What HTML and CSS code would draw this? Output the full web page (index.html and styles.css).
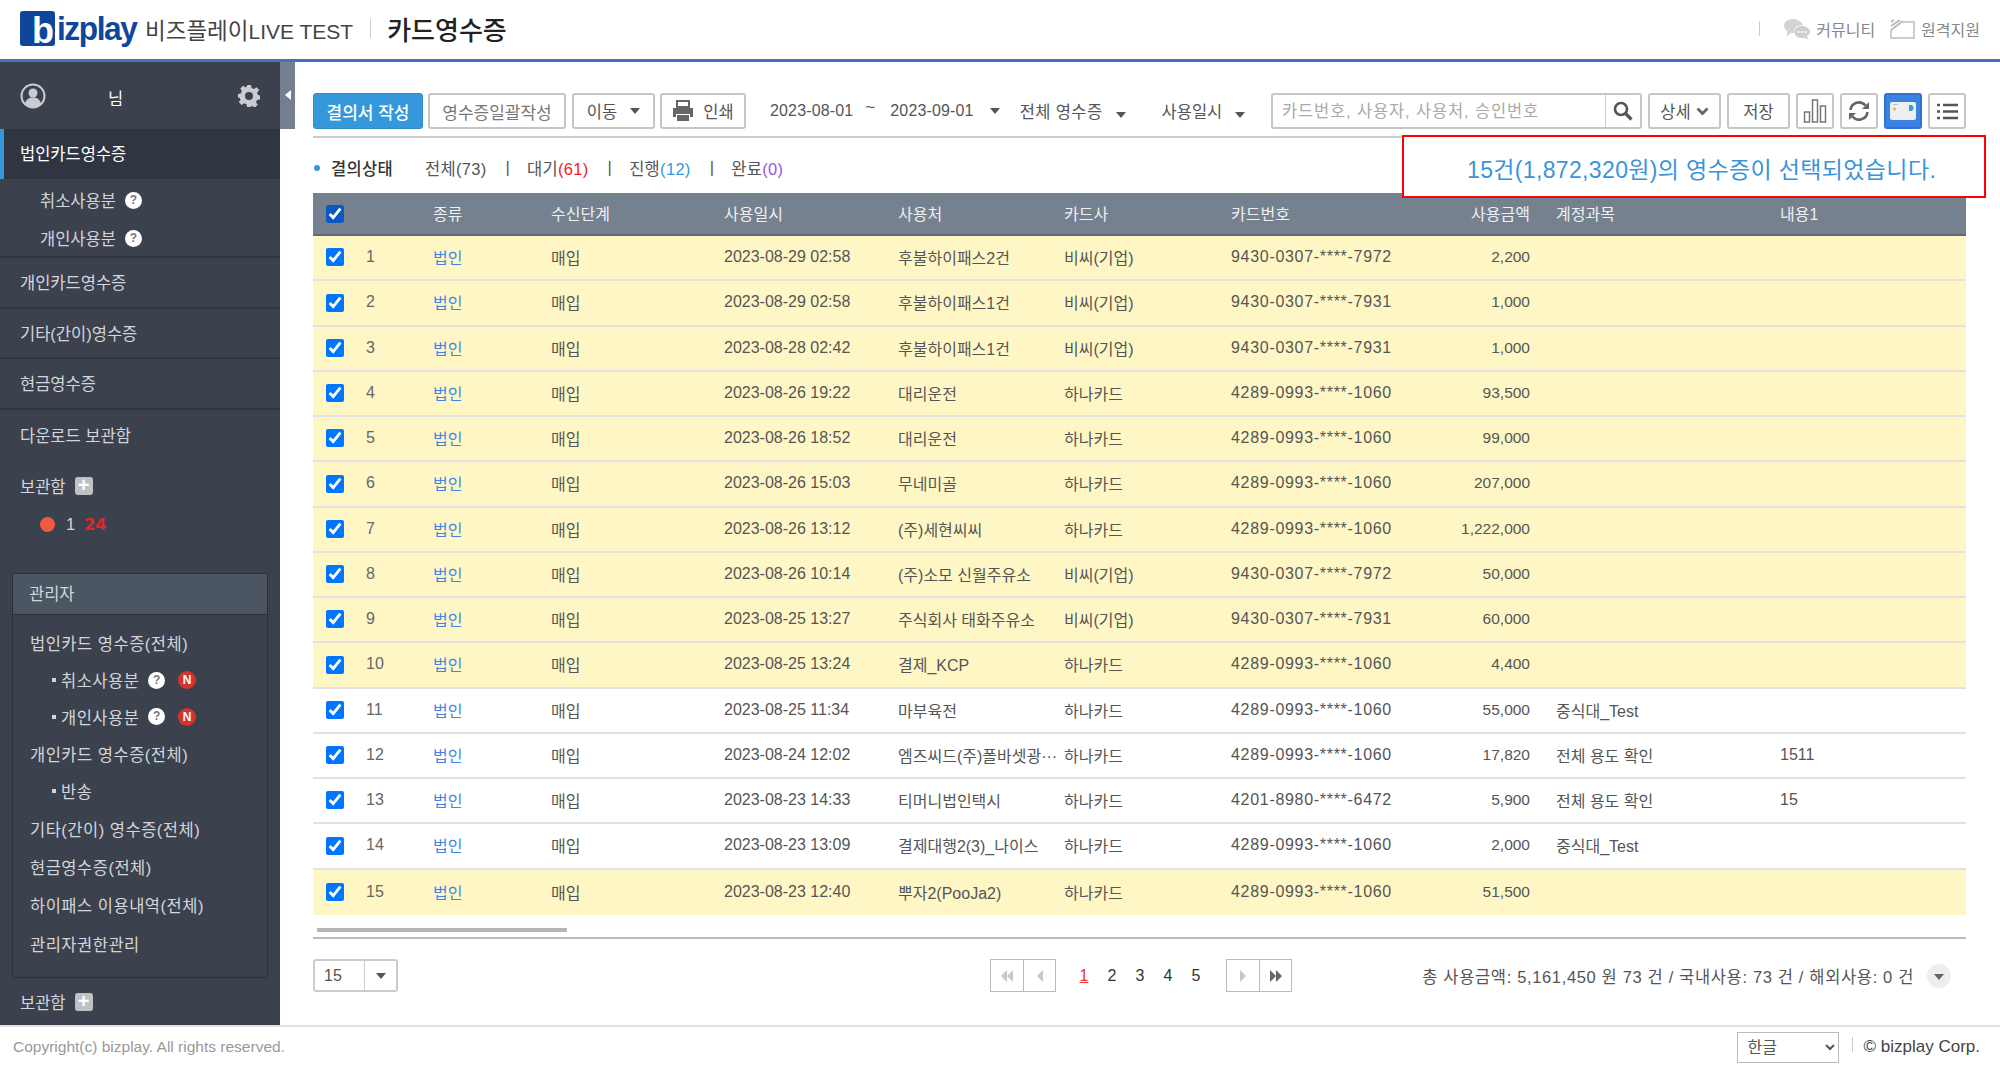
FILE: index.html
```html
<!DOCTYPE html>
<html lang="ko">
<head>
  <meta charset="UTF-8" />
  <title>bizplay 카드영수증</title>
  <link rel="stylesheet" href="styles.css">
</head>
<body>
  <header class="top">
    <div class="logo"><span class="logo-b">b</span><span class="logo-rest">izplay</span></div>
    <span class="company">비즈플레이<span class="company-en">LIVE TEST</span></span>
    <span class="top-sep"></span>
    <span class="page-title">카드영수증</span>
    <div class="top-links">
      <span class="top-sep-right"></span>
      <svg class="top-icon" width="26" height="20" viewBox="0 0 26 20"><path d="M9 0C4 0 0 3 0 7c0 2.400 1.500 4.400 3.500 5.600L2.500 17l5-3.200c1 .2 2 .2 3 0C9.500 9 13 6 19 6 17.500 2.500 13.500 0 9 0z" fill="#d4d4d4"/><path d="M18 7c-4.500 0-7.500 2.700-7.500 6s3 6 7.500 6c.7 0 1.400 0 2-.2L24 20l-1-3.200c1.800-1 3-2.300 3-3.800 0-3.300-3.500-6-8-6z" fill="#cfcfcf"/><circle cx="14.500" cy="13" r="1.100" fill="#fff"/><circle cx="18" cy="13" r="1.100" fill="#fff"/><circle cx="21.500" cy="13" r="1.100" fill="#fff"/></svg>
      <span>커뮤니티</span>
      <svg class="top-icon icon-remote" width="25" height="20" viewBox="0 0 25 20"><path d="M13 3h11v16H1V11" fill="none" stroke="#ccc" stroke-width="2"/><path d="M1 7L10 1M1 3l3-2M1 11L13 2" stroke="#bbb" stroke-width="2" fill="none"/></svg>
      <span>원격지원</span>
    </div>
  </header>

  <div class="layout">
    <aside class="sidebar">
      <button class="side-toggle"><svg width="6" height="10" viewBox="0 0 6 10"><path d="M6 0v10L0 5z" fill="#fff"/></svg></button>
      <div class="user-box">
        <svg width="26" height="26" viewBox="0 0 26 26"><circle cx="13" cy="13" r="11.500" fill="#3b424e" stroke="#c9cdd2" stroke-width="2"/><circle cx="13" cy="10" r="4.500" fill="#c9cdd2"/><path d="M5 21c1-5 4-6.500 8-6.500s7 1.500 8 6.500a11 11 0 0 1-16 0z" fill="#c9cdd2"/></svg>
        <span class="user-name">님</span>
        <svg class="gear" width="22" height="22" viewBox="0 0 22 22"><path d="M9 0h4l.6 3 2.300 1 2.600-1.700 2.800 2.800L19 7.700l1 2.300 2 .6v4l-3 .4-1 2.300 1.700 2.500-2.800 2.800-2.500-1.700-2.400 1L12.600 22H9l-.5-2.800-2.400-1-2.500 1.700-2.800-2.800L2.500 15l-.9-2.200L0 12.600V9l2.800-.6 1-2.300L2.300 3.600l2.800-2.800 2.500 1.700L9.400.6z" fill="#c9cdd2"/><circle cx="11" cy="11" r="4" fill="#3b424e"/></svg>
      </div>

      <a class="side-item active">법인카드영수증</a>
      <div class="side-sub">
        <div class="sub-item">취소사용분 <span class="qmark">?</span></div>
        <div class="sub-item">개인사용분 <span class="qmark">?</span></div>
      </div>
      <a class="side-item">개인카드영수증</a>
      <a class="side-item">기타(간이)영수증</a>
      <a class="side-item">현금영수증</a>
      <a class="side-item no-line">다운로드 보관함</a>

      <div class="box-title first">보관함 <span class="plus">+</span></div>
      <div class="box-row"><span class="red-dot"></span><span class="box-name">1</span><b class="box-count">24</b></div>

      <div class="admin">
        <div class="admin-head">관리자</div>
        <div class="admin-list">
          <div class="admin-item">법인카드 영수증(전체)</div>
          <div class="admin-sub"><i></i>취소사용분 <span class="qmark">?</span><span class="nbadge">N</span></div>
          <div class="admin-sub"><i></i>개인사용분 <span class="qmark">?</span><span class="nbadge">N</span></div>
          <div class="admin-item">개인카드 영수증(전체)</div>
          <div class="admin-sub"><i></i>반송</div>
          <div class="admin-item">기타(간이) 영수증(전체)</div>
          <div class="admin-item">현금영수증(전체)</div>
          <div class="admin-item">하이패스 이용내역(전체)</div>
          <div class="admin-item">관리자권한관리</div>
        </div>
      </div>

      <div class="box-title last">보관함 <span class="plus">+</span></div>
    </aside>

    <main class="content">
      <div class="toolbar">
        <button class="btn btn-primary w-110">결의서 작성</button>
        <button class="btn w-138 faint">영수증일괄작성</button>
        <button class="btn w-83">이동<span class="caret"></span></button>
        <button class="btn w-86">
          <svg width="22" height="22" viewBox="0 0 22 22"><path d="M5 1h12v6H5z" fill="none" stroke="#666" stroke-width="2"/><path d="M1 8h20v9h-3v-3H4v3H1z" fill="#666"/><path d="M5 15h12v6H5z" fill="#666"/></svg>
          <span class="print-label">인쇄</span>
        </button>
        <span class="date">2023-08-01</span><span class="tilde">~</span><span class="date">2023-09-01</span><span class="caret caret-date"></span>
        <span class="filter f-all">전체 영수증<span class="caret"></span></span>
        <span class="filter f-use">사용일시<span class="caret"></span></span>
        <div class="search">
          <span class="search-text">카드번호, 사용자, 사용처, 승인번호</span>
          <span class="search-btn"><svg width="20" height="20" viewBox="0 0 20 20"><circle cx="8" cy="8" r="6" fill="none" stroke="#555" stroke-width="2.600"/><path d="M12.500 12.500L18.500 18.500" stroke="#555" stroke-width="3.200"/></svg></span>
        </div>
        <button class="btn w-73">상세<svg class="chev" width="13" height="9" viewBox="0 0 13 9"><path d="M1.500 1.500l5 5 5-5" fill="none" stroke="#666" stroke-width="2.800"/></svg></button>
        <button class="btn w-63">저장</button>
        <button class="btn w-38"><svg width="26" height="24" viewBox="0 0 26 24"><path d="M2.500 13h5v10h-5zM10.500 1h5v22h-5zM18.500 7h5v16h-5z" fill="none" stroke="#777" stroke-width="1.500"/></svg></button>
        <button class="btn w-38"><svg width="24" height="24" viewBox="0 0 24 24"><path d="M3.500 11a8.500 8.500 0 0 1 15-4.500" fill="none" stroke="#666" stroke-width="2.600"/><path d="M22 3v7h-7z" fill="#666"/><path d="M20.500 13a8.500 8.500 0 0 1-15 4.500" fill="none" stroke="#666" stroke-width="2.600"/><path d="M2 21v-7h7z" fill="#666"/></svg></button>
        <button class="btn w-38 btn-card"><svg width="28" height="22" viewBox="0 0 28 22"><rect x="1" y="2" width="26" height="18" rx="2" fill="#edeff1"/><path d="M4 4.500h5" stroke="#a9cbe8" stroke-width="1"/><circle cx="5.500" cy="9" r="1.600" fill="#f5b042"/><path d="M20 5h3l2 3-2 3h-3z" fill="#3d9bdc"/></svg></button>
        <button class="btn w-38"><svg width="21" height="17" viewBox="0 0 21 17"><path d="M6 2h15M6 8.500h15M6 15h15" stroke="#555" stroke-width="2.400"/><path d="M0 2h3M0 8.500h3M0 15h3" stroke="#555" stroke-width="2.400"/></svg></button>
      </div>

      <div class="status">
        <span class="status-dot"></span>
        <b class="status-label">결의상태</b>
        <span>전체(73)</span><span class="bar">|</span>
        <span>대기<em class="c-red">(61)</em></span><span class="bar">|</span>
        <span>진행<em class="c-blue">(12)</em></span><span class="bar">|</span>
        <span>완료<em class="c-purple">(0)</em></span>
      </div>

      <div class="selected-note">15건(1,872,320원)의 영수증이 선택되었습니다.</div>

      <table class="grid">
        <colgroup>
          <col class="c-chk"><col class="c-no"><col class="c-type"><col class="c-stage"><col class="c-date"><col class="c-vendor"><col class="c-card"><col class="c-cardno"><col class="c-amt"><col class="c-acct"><col>
        </colgroup>
        <thead>
          <tr><th class="center"><input type="checkbox" class="chk-head" checked></th><th></th><th>종류</th><th>수신단계</th><th>사용일시</th><th>사용처</th><th>카드사</th><th>카드번호</th><th class="right">사용금액</th><th class="acct">계정과목</th><th>내용1</th></tr>
        </thead>
        <tbody>
          <tr class="on"><td class="center"><input type="checkbox" checked></td><td class="no">1</td><td class="link">법인</td><td>매입</td><td class="num">2023-08-29 02:58</td><td>후불하이패스2건</td><td>비씨(기업)</td><td class="cardno">9430-0307-****-7972</td><td class="amt">2,200</td><td class="acct"></td><td></td></tr>
          <tr class="on"><td class="center"><input type="checkbox" checked></td><td class="no">2</td><td class="link">법인</td><td>매입</td><td class="num">2023-08-29 02:58</td><td>후불하이패스1건</td><td>비씨(기업)</td><td class="cardno">9430-0307-****-7931</td><td class="amt">1,000</td><td class="acct"></td><td></td></tr>
          <tr class="on"><td class="center"><input type="checkbox" checked></td><td class="no">3</td><td class="link">법인</td><td>매입</td><td class="num">2023-08-28 02:42</td><td>후불하이패스1건</td><td>비씨(기업)</td><td class="cardno">9430-0307-****-7931</td><td class="amt">1,000</td><td class="acct"></td><td></td></tr>
          <tr class="on"><td class="center"><input type="checkbox" checked></td><td class="no">4</td><td class="link">법인</td><td>매입</td><td class="num">2023-08-26 19:22</td><td>대리운전</td><td>하나카드</td><td class="cardno">4289-0993-****-1060</td><td class="amt">93,500</td><td class="acct"></td><td></td></tr>
          <tr class="on"><td class="center"><input type="checkbox" checked></td><td class="no">5</td><td class="link">법인</td><td>매입</td><td class="num">2023-08-26 18:52</td><td>대리운전</td><td>하나카드</td><td class="cardno">4289-0993-****-1060</td><td class="amt">99,000</td><td class="acct"></td><td></td></tr>
          <tr class="on"><td class="center"><input type="checkbox" checked></td><td class="no">6</td><td class="link">법인</td><td>매입</td><td class="num">2023-08-26 15:03</td><td>무네미골</td><td>하나카드</td><td class="cardno">4289-0993-****-1060</td><td class="amt">207,000</td><td class="acct"></td><td></td></tr>
          <tr class="on"><td class="center"><input type="checkbox" checked></td><td class="no">7</td><td class="link">법인</td><td>매입</td><td class="num">2023-08-26 13:12</td><td>(주)세현씨씨</td><td>하나카드</td><td class="cardno">4289-0993-****-1060</td><td class="amt">1,222,000</td><td class="acct"></td><td></td></tr>
          <tr class="on"><td class="center"><input type="checkbox" checked></td><td class="no">8</td><td class="link">법인</td><td>매입</td><td class="num">2023-08-26 10:14</td><td>(주)소모 신월주유소</td><td>비씨(기업)</td><td class="cardno">9430-0307-****-7972</td><td class="amt">50,000</td><td class="acct"></td><td></td></tr>
          <tr class="on"><td class="center"><input type="checkbox" checked></td><td class="no">9</td><td class="link">법인</td><td>매입</td><td class="num">2023-08-25 13:27</td><td>주식회사 태화주유소</td><td>비씨(기업)</td><td class="cardno">9430-0307-****-7931</td><td class="amt">60,000</td><td class="acct"></td><td></td></tr>
          <tr class="on"><td class="center"><input type="checkbox" checked></td><td class="no">10</td><td class="link">법인</td><td>매입</td><td class="num">2023-08-25 13:24</td><td>결제_KCP</td><td>하나카드</td><td class="cardno">4289-0993-****-1060</td><td class="amt">4,400</td><td class="acct"></td><td></td></tr>
          <tr><td class="center"><input type="checkbox" checked></td><td class="no">11</td><td class="link">법인</td><td>매입</td><td class="num">2023-08-25 11:34</td><td>마부육전</td><td>하나카드</td><td class="cardno">4289-0993-****-1060</td><td class="amt">55,000</td><td class="acct">중식대_Test</td><td></td></tr>
          <tr><td class="center"><input type="checkbox" checked></td><td class="no">12</td><td class="link">법인</td><td>매입</td><td class="num">2023-08-24 12:02</td><td><div class="clip">엠즈씨드(주)폴바셋광···</div></td><td>하나카드</td><td class="cardno">4289-0993-****-1060</td><td class="amt">17,820</td><td class="acct">전체 용도 확인</td><td class="num">1511</td></tr>
          <tr><td class="center"><input type="checkbox" checked></td><td class="no">13</td><td class="link">법인</td><td>매입</td><td class="num">2023-08-23 14:33</td><td>티머니법인택시</td><td>하나카드</td><td class="cardno">4201-8980-****-6472</td><td class="amt">5,900</td><td class="acct">전체 용도 확인</td><td class="num">15</td></tr>
          <tr><td class="center"><input type="checkbox" checked></td><td class="no">14</td><td class="link">법인</td><td>매입</td><td class="num">2023-08-23 13:09</td><td>결제대행2(3)_나이스</td><td>하나카드</td><td class="cardno">4289-0993-****-1060</td><td class="amt">2,000</td><td class="acct">중식대_Test</td><td></td></tr>
          <tr class="on"><td class="center"><input type="checkbox" checked></td><td class="no">15</td><td class="link">법인</td><td>매입</td><td class="num">2023-08-23 12:40</td><td>뿌자2(PooJa2)</td><td>하나카드</td><td class="cardno">4289-0993-****-1060</td><td class="amt">51,500</td><td class="acct"></td><td></td></tr>
        </tbody>
      </table>

      <div class="hscroll"><div class="hscroll-thumb"></div></div>

      <div class="pager-row">
        <div class="page-size"><span class="size-val">15</span><span class="size-arrow"><span class="caret"></span></span></div>
        <div class="pager">
          <div class="page-btns">
            <span><svg width="14" height="12" viewBox="0 0 14 12"><path d="M7 0v12L1 6zM13 0v12L7 6z" fill="#c3c9cf"/></svg></span>
            <span><svg width="8" height="12" viewBox="0 0 8 12"><path d="M7 0v12L1 6z" fill="#c3c9cf"/></svg></span>
          </div>
          <div class="pages"><a class="cur">1</a><a>2</a><a>3</a><a>4</a><a>5</a></div>
          <div class="page-btns">
            <span><svg width="8" height="12" viewBox="0 0 8 12"><path d="M1 0v12l6-6z" fill="#c3c9cf"/></svg></span>
            <span><svg width="14" height="12" viewBox="0 0 14 12"><path d="M1 0v12l6-6zM7 0v12l6-6z" fill="#666"/></svg></span>
          </div>
        </div>
        <div class="totals">
          <span>총 사용금액: 5,161,450 원 73 건 / 국내사용: 73 건 / 해외사용: 0 건</span>
          <span class="more"><span class="caret"></span></span>
        </div>
      </div>
    </main>
  </div>

  <footer class="foot">
    <span class="copy">Copyright(c) bizplay. All rights reserved.</span>
    <select class="lang"><option>한글</option></select>
    <span class="foot-sep"></span>
    <span class="corp">© bizplay Corp.</span>
  </footer>
</body>
</html>
```

FILE: styles.css
```css
* {
  box-sizing: border-box;
}
html, body {
  margin: 0;
  height: 100%;
  overflow: hidden;
}
body {
  display: flex;
  flex-direction: column;
  font-family: "Liberation Sans", "Noto Sans CJK KR", sans-serif;
  font-size: 16px;
  color: #555;
  background: #fff;
}

/* header */
.top {
  height: 62px;
  flex: none;
  display: flex;
  align-items: center;
  padding: 0 20px 2px;
  border-bottom: 3px solid #4a6fbd;
}
.logo {
  display: flex;
  align-items: center;
  width: 125px;
  margin-top: -1px;
}
.logo-b {
  width: 35px;
  height: 35px;
  padding: 2px 0 0 12px;
  background: #0f469c;
  color: #fff;
  border-radius: 3px;
  font: bold 36px/35px "Liberation Sans", sans-serif;
}
.logo-rest {
  color: #0f469c;
  font: bold 33px/35px "Liberation Sans", sans-serif;
  letter-spacing: -1.5px;
  margin-left: 2px;
  transform: scaleX(0.96);
  transform-origin: left;
}
.company {
  font-size: 22.5px;
  color: #444;
  white-space: nowrap;
}
.company-en {
  font-size: 21px;
}
.top-sep {
  width: 1px;
  height: 19px;
  background: #ccc;
  margin: 0 16px 0 17px;
}
.page-title {
  font-size: 26px;
  font-weight: 500;
  color: #222;
}
.top-links {
  margin-left: auto;
  display: flex;
  align-items: center;
  color: #888;
}
.top-sep-right {
  width: 1px;
  height: 15px;
  background: #ccc;
  margin-right: 24px;
}
.top-icon {
  margin-right: 6px;
}
.icon-remote {
  margin-left: 15px;
}

.layout {
  flex: 1;
  display: flex;
  min-height: 0;
}

/* sidebar */
.sidebar {
  width: 280px;
  flex: none;
  position: relative;
  background: #3b424e;
  color: #d3d6da;
  font-size: 16.5px;
}
.side-toggle {
  position: absolute;
  left: 100%;
  top: 0;
  width: 15px;
  height: 67px;
  padding: 0;
  border: none;
  background: #74808f;
}
.user-box {
  height: 67px;
  display: flex;
  align-items: center;
  padding-left: 20px;
}
.user-name {
  color: #fff;
  margin-left: 62px;
  margin-top: 4px;
}
.gear {
  margin-left: auto;
  margin-right: 20px;
}
.side-item {
  display: flex;
  align-items: center;
  height: 50.500px;
  padding-left: 20px;
  border-bottom: 2px solid #2f3641;
}
.side-item.active {
  height: 50px;
  padding-bottom: 2px;
  color: #fff;
  background: #2f3642;
  border-bottom: none;
  border-left: 4px solid #3498db;
  padding-left: 16px;
}
.side-item.no-line {
  border-bottom: none;
}
.side-sub {
  height: 79px;
  padding-top: 2px;
  border-bottom: 2px solid #2f3641;
}
.sub-item {
  height: 38px;
  display: flex;
  align-items: center;
  padding-left: 40px;
}
.qmark {
  width: 17px;
  height: 17px;
  margin-left: 9px;
  border-radius: 50%;
  background: #fff;
  color: #777;
  font-size: 12px;
  font-weight: bold;
  line-height: 17px;
  text-align: center;
}
.box-title {
  display: flex;
  align-items: center;
  height: 24px;
  padding-left: 20px;
}
.box-title.first {
  margin-top: 14px;
}
.box-title.last {
  margin-top: 12px;
}
.plus {
  width: 18px;
  height: 18px;
  margin-left: 9px;
  border-radius: 3px;
  background: #bfc1c4;
  color: #fff;
  font-size: 20px;
  font-weight: bold;
  line-height: 17px;
  text-align: center;
}
.box-row {
  display: flex;
  align-items: center;
  height: 20px;
  margin-top: 16px;
  padding-left: 40px;
}
.red-dot {
  width: 15px;
  height: 15px;
  border-radius: 50%;
  background: #ee5a45;
}
.box-name {
  margin-left: 11px;
}
.box-count {
  margin-left: 9px;
  color: #e3262c;
  font-size: 16px;
  font-family: "DejaVu Sans", sans-serif;
}
.admin {
  margin: 39px 12px 0;
  height: 405px;
  border: 1px solid #2b313b;
}
.admin-head {
  height: 41px;
  padding-left: 16px;
  line-height: 40px;
  background: #4c5663;
  border-bottom: 1px solid #2b313b;
}
.admin-list {
  padding-top: 9px;
  letter-spacing: 0.5px;
}
.admin-item {
  height: 38.300px;
  display: flex;
  align-items: center;
  padding-left: 17px;
}
.admin-sub {
  height: 36.300px;
  display: flex;
  align-items: center;
  padding-left: 39px;
}
.admin-sub i {
  width: 4px;
  height: 4px;
  margin-right: 5px;
  background: #d3d6da;
}
.nbadge {
  width: 18px;
  height: 18px;
  margin-left: 13px;
  border-radius: 50%;
  background: #d6322f;
  color: #fff;
  font-size: 12px;
  font-weight: bold;
  line-height: 18px;
  text-align: center;
}

/* main */
.content {
  flex: 1;
  min-width: 0;
  position: relative;
  padding: 31px 34px 0 33px;
}
.toolbar {
  display: flex;
  align-items: center;
  height: 45px;
  padding-bottom: 7px;
  border-bottom: 2px solid #ccc;
  color: #555;
}
.btn {
  height: 36px;
  margin-right: 6px;
  padding: 0;
  display: flex;
  align-items: center;
  justify-content: center;
  flex: none;
  background: #fff;
  border: 2px solid #c6c6c6;
  border-radius: 3px;
  color: #555;
  font: 16.5px "Liberation Sans", "Noto Sans CJK KR", sans-serif;
}
.btn-primary {
  background: #3498db;
  border: 1px solid #2f8bc9;
  color: #fff;
  font-size: 17px;
  font-weight: 500;
}
.btn-card {
  background: #3a82e4;
  border-color: #2f74d4;
}
.faint {
  color: #777;
  font-size: 17px;
}
.w-110 { width: 110px; margin-right: 5px; }
.w-138 { width: 138px; }
.w-83 { width: 83px; margin-right: 5px; }
.w-86 { width: 86px; }
.w-73 { width: 73px; }
.w-63 { width: 63px; }
.w-38 { width: 38px; }
.w-38:last-child { margin-right: 0; }
.print-label {
  margin-left: 9px;
}
.caret {
  display: inline-block;
  width: 0;
  height: 0;
  margin-left: 13px;
  border-left: 5px solid transparent;
  border-right: 5px solid transparent;
  border-top: 6px solid #555;
}
.chev {
  margin-left: 5px;
}
.date {
  font-size: 16px;
  margin-left: 18px;
  letter-spacing: 0.15px;
  white-space: nowrap;
}
.tilde {
  margin-left: 12px;
  margin-right: -3px;
  font-size: 17px;
  margin-top: -6px;
}
.caret-date {
  margin-left: 16px;
}
.filter {
  font-size: 16.5px;
  letter-spacing: 0.4px;
  white-space: nowrap;
}
.f-all {
  margin-left: 20px;
}
.f-use {
  margin-left: 36px;
  letter-spacing: 0;
}
.search {
  display: flex;
  width: 371px;
  height: 36px;
  margin-left: auto;
  margin-right: 6px;
  flex: none;
  border: 2px solid #c6c6c6;
  border-radius: 3px;
}
.search-text {
  flex: 1;
  padding-left: 9px;
  line-height: 32px;
  color: #aaa;
  font-size: 16.5px;
  letter-spacing: 0.85px;
}
.search-btn {
  width: 35px;
  border-left: 1px solid #ccc;
  display: flex;
  align-items: center;
  justify-content: center;
}
.status {
  display: flex;
  align-items: center;
  height: 55px;
  padding-top: 4px;
  font-size: 16.5px;
  letter-spacing: 0.3px;
}
.status-dot {
  width: 6px;
  height: 6px;
  margin: 0 11px 0 1px;
  border-radius: 50%;
  background: #3498db;
}
.status-label {
  font-weight: 500;
  color: #333;
  margin-right: 32px;
}
.status em {
  font-style: normal;
}
.bar {
  margin: 0 17px 0 19px;
}
.c-red { color: #ee2222; }
.c-blue { color: #3498db; }
.c-purple { color: #a050e8; }

.selected-note {
  position: absolute;
  left: 1122px;
  top: 73px;
  width: 584px;
  height: 63px;
  padding: 20px 0 0 63px;
  background: #fff;
  border: 2px solid #f00;
  color: #3a94db;
  font-size: 23px;
  letter-spacing: 0.35px;
  line-height: 26px;
  white-space: nowrap;
}

/* table */
.grid {
  width: 1653px;
  table-layout: fixed;
  border-collapse: separate;
  border-spacing: 0;
}
.c-chk { width: 44px; }
.c-no { width: 76px; }
.c-type { width: 118px; }
.c-stage { width: 173px; }
.c-date { width: 174px; }
.c-vendor { width: 166px; }
.c-card { width: 167px; }
.c-cardno { width: 190px; }
.c-amt { width: 109px; }
.c-acct { width: 250px; }
.grid th {
  height: 43px;
  padding: 0 0 1px;
  background: #76818f;
  border-bottom: 2px solid #5f6a78;
  color: #eef0f2;
  font-weight: normal;
  font-size: 16px;
  text-align: left;
}
.grid th.right {
  text-align: right;
}
.grid td {
  height: 45px;
  padding: 0 0 2px;
  border-bottom: 2px solid #e2e2e2;
  white-space: nowrap;
}
.grid tr:nth-child(4n+2) td {
  height: 46px;
}
.grid tr:last-child td {
  border-bottom: none;
}
.grid tr.on td {
  background: #fef7c5;
}
.grid input {
  width: 18px;
  height: 18px;
  margin: 5px 0 0;
  accent-color: #0075ff;
}
.grid input.chk-head {
  accent-color: #0b57c4;
}
.grid .center {
  text-align: center;
}
.grid .no {
  padding-left: 9px;
  color: #666;
}
.grid .link {
  color: #3f86e8;
}
.grid .num {
  font-size: 16px;
}
.grid .cardno {
  font-size: 16px;
  letter-spacing: 0.7px;
}
.grid .amt {
  text-align: right;
  font-size: 15.5px;
}
.grid .acct {
  padding-left: 26px;
}
.grid .clip {
  width: 160px;
  overflow: hidden;
}

.hscroll {
  height: 24px;
  padding-top: 13px;
  border-bottom: 2px solid #bbb;
}
.hscroll-thumb {
  width: 250px;
  height: 4px;
  margin-left: 4px;
  background: #b5b5b5;
}

/* pager */
.pager-row {
  position: relative;
  display: flex;
  align-items: center;
  height: 33px;
  margin-top: 20px;
}
.page-size {
  display: flex;
  width: 85px;
  height: 33px;
  border: 2px solid #ccc;
  border-radius: 3px;
}
.size-val {
  flex: 1;
  padding-left: 9px;
  line-height: 30px;
  font-size: 16px;
}
.size-arrow {
  width: 32px;
  border-left: 1px solid #ccc;
  text-align: center;
  line-height: 26px;
}
.size-arrow .caret {
  margin: 0;
}
.pager {
  display: flex;
  align-items: center;
  margin-left: 592px;
}
.page-btns {
  display: flex;
  height: 33px;
  border: 1px solid #bbb;
}
.page-btns span {
  width: 32px;
  display: flex;
  align-items: center;
  justify-content: center;
}
.page-btns span + span {
  border-left: 1px solid #bbb;
}
.pages {
  display: flex;
  width: 170px;
  padding-left: 14px;
  font-size: 16px;
  color: #333;
}
.pages a {
  width: 28px;
  text-align: center;
}
.pages a.cur {
  color: #e33;
  text-decoration: underline;
}
.totals {
  margin-left: auto;
  display: flex;
  align-items: center;
  font-size: 16.5px;
  letter-spacing: 0.65px;
  white-space: nowrap;
}
.more {
  width: 24px;
  height: 24px;
  margin: 0 15px 0 13px;
  border-radius: 50%;
  background: #eee;
  text-align: center;
  line-height: 20px;
}
.more .caret {
  margin: 0;
  border-top-color: #666;
}

/* footer */
.foot {
  height: 42px;
  flex: none;
  display: flex;
  align-items: center;
  padding: 0 20px 0 13px;
  border-top: 2px solid #e2e2e2;
}
.copy {
  font-size: 15.5px;
  color: #999;
  margin-right: auto;
}
.lang {
  width: 102px;
  height: 31px;
  padding-left: 6px;
  background: #fff;
  border: 1px solid #bbb;
  color: #555;
  font: 16px "Liberation Sans", "Noto Sans CJK KR", sans-serif;
}
.foot-sep {
  width: 1px;
  height: 15px;
  margin: 10px 11px 0 13px;
  background: #ccc;
  align-self: flex-start;
}
.corp {
  font-size: 17px;
  color: #444;
}
```
